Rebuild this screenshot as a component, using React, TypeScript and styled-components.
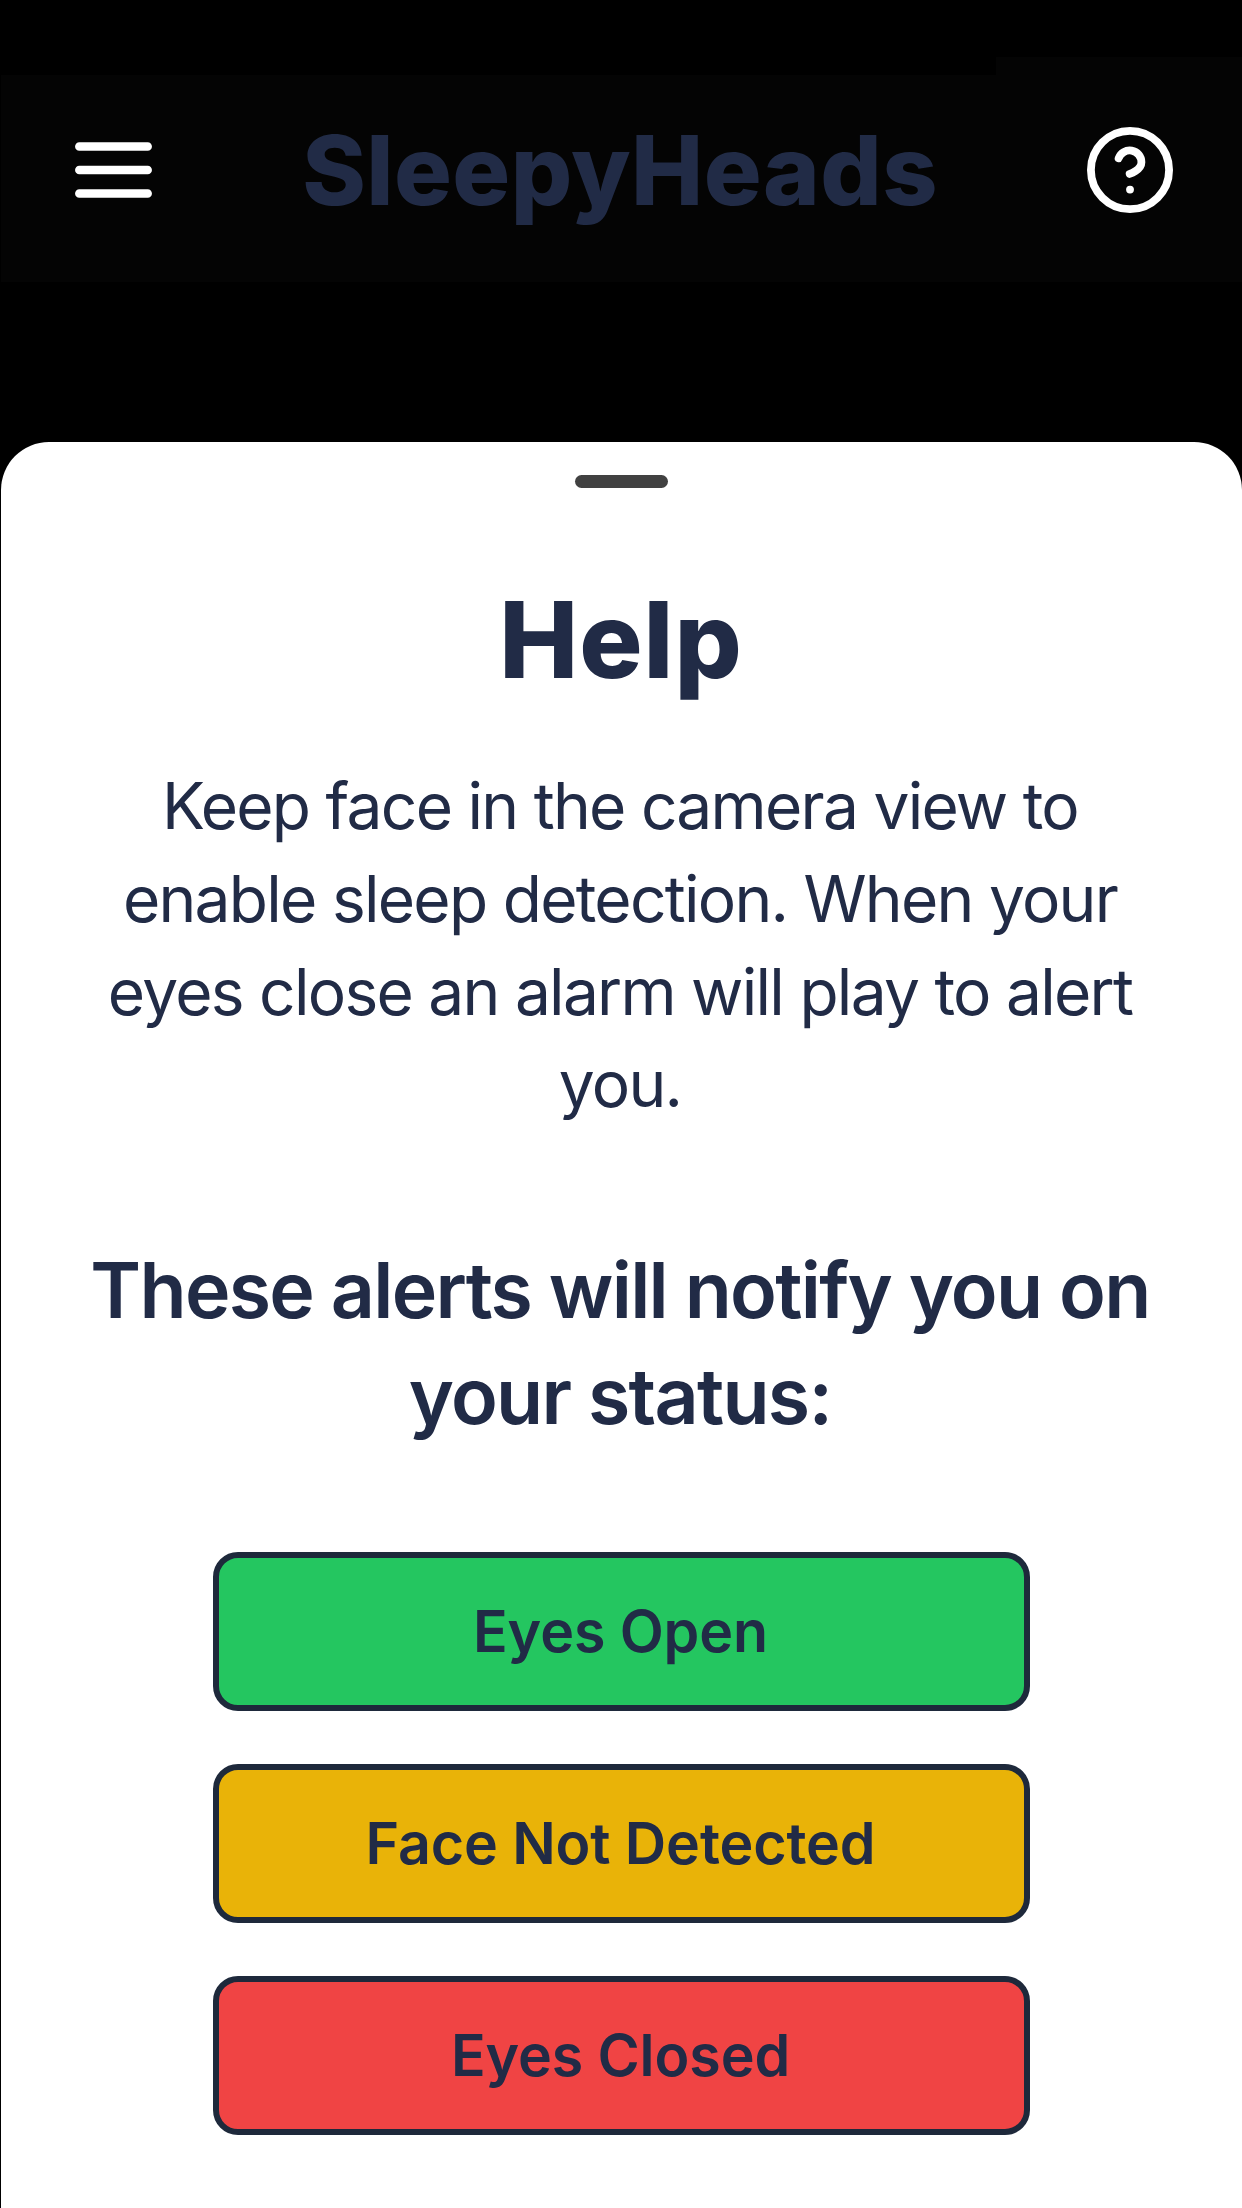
import React from 'react';
import styled, { createGlobalStyle } from 'styled-components';

const Global = createGlobalStyle`
  * { box-sizing: border-box; }
  body { margin: 0; background: #000; font-family: Inter, "Liberation Sans", sans-serif; color: #212b46; }
  h1, h2, h3, p { margin: 0; }
`;
const Screen = styled.main`
  width: 1242px; height: 2208px; display: flex; flex-direction: column; background: #000; overflow: hidden;
`;
const StatusEdge = styled.div`
  margin-top: 57px; width: 246px; height: 18px; align-self: flex-end; background: #040404; flex: none;
`;
const Header = styled.header`
  height: 207px; margin-left: 1px; padding: 0 69px 17px 74px; background: #040404;
  display: flex; align-items: center; justify-content: space-between; flex: none;
`;
const IconButton = styled.button`
  border: 0; padding: 0; background: none; color: #fff; display: flex;
`;
const Brand = styled.h1`
  padding: 0 0 1px 1px; font-size: 96.5px; line-height: 112px; font-weight: 800; letter-spacing: 0.4px;
`;
const Sheet = styled.section`
  margin: 160px 0 0 1px; flex: 1; background: #fff; border-radius: 48px 48px 0 0;
  display: flex; flex-direction: column; align-items: center; text-align: center;
`;
const Handle = styled.div`margin-top: 33px; width: 93px; height: 13px; border-radius: 7px; background: #414141; flex: none;`;
const Title = styled.h2`
  margin-top: 90px; padding-right: 1px; font-size: 105.5px; line-height: 124px; font-weight: 820; letter-spacing: 1px;
`;
const Copy = styled.p`
  margin-top: 58px; padding-right: 3px; font-size: 64px; line-height: 92.8px; font-weight: 420; letter-spacing: -1.72px;
`;
const Notice = styled.h3`
  margin-top: 106px; padding-right: 3px; font-size: 77px; line-height: 106px; font-weight: 600; letter-spacing: -1.72px;
`;
const Alerts = styled.div`margin-top: 103px; display: flex; flex-direction: column; gap: 53px;`;
const Alert = styled.div<{ $color: string }>`
  width: 817px; height: 159px; border: 6px solid #1e293b; border-radius: 25px; background: ${p => p.$color};
  display: flex; align-items: center; justify-content: center; padding: 0 2px 2px 0;
  font-size: 57.3px; font-weight: 600; letter-spacing: -0.1px;
`;

export default function App() {
  return (
    <>
      <Global />
      <Screen>
        <StatusEdge />
        <Header>
          <IconButton aria-label="Menu">
            <svg width="77" height="56" viewBox="0 0 77 56" stroke="currentColor" strokeWidth="8.5" strokeLinecap="round">
              <path d="M4.3 4.5H72.7M4.3 28H72.7M4.3 51.5H72.7" />
            </svg>
          </IconButton>
          <Brand>SleepyHeads</Brand>
          <IconButton aria-label="Help">
            <svg width="86" height="86" viewBox="1 1 22 22" fill="none" stroke="currentColor" strokeWidth="2" strokeLinecap="round" strokeLinejoin="round">
              <circle cx="12" cy="12" r="10" />
              <path d="M9.09 9a3 3 0 0 1 5.83 1c0 2-3 3-3 3M12 17h.01" />
            </svg>
          </IconButton>
        </Header>
        <Sheet>
          <Handle />
          <Title>Help</Title>
          <Copy>Keep face in the camera view to<br />enable sleep detection. When your<br />eyes close an alarm will play to alert<br />you.</Copy>
          <Notice>These alerts will notify you on<br />your status:</Notice>
          <Alerts>
            <Alert $color="#24c660">Eyes Open</Alert>
            <Alert $color="#e9b308">Face Not Detected</Alert>
            <Alert $color="#f04444">Eyes Closed</Alert>
          </Alerts>
        </Sheet>
      </Screen>
    </>
  );
}
